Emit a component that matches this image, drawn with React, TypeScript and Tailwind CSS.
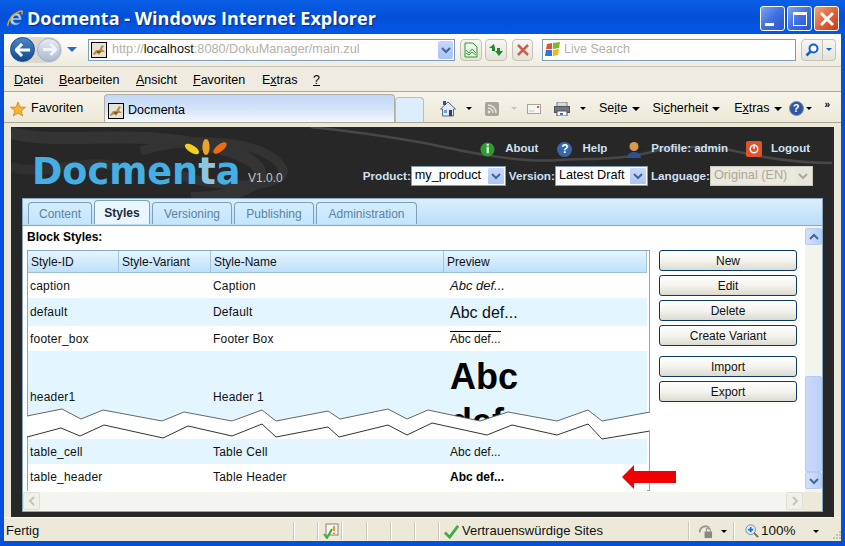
import React from 'react';
import clsx from 'clsx';

const ui = 'font-["Liberation_Sans",Arial,sans-serif]';

const Favicon = () => (
  <span className="flex h-[16px] w-[16px] shrink-0 items-center justify-center border border-black bg-white">
    <svg viewBox="0 0 14 14" className="h-[14px] w-[14px]">
      <rect width="14" height="14" fill="#e6e2d4" />
      <path d="M1 11 L4 7 L7 7 L10 2 L12 3 L10 6 L13 9 L9 9 L7 12 L5 10 L2 12Z" fill="#b98a4a" />
      <path d="M5 8 L9 8 L8 10 L5 10Z" fill="#7d5a2c" />
    </svg>
  </span>
);

const Chevron = ({ up, color = '#3e6a9a' }: { up?: boolean; color?: string }) => (
  <svg viewBox="0 0 10 8" className="h-[8px] w-[10px]">
    <path d={up ? 'M1 6 L5 2 L9 6' : 'M1 2 L5 6 L9 2'} fill="none" stroke={color} strokeWidth="2" />
  </svg>
);

const Caret = ({ className, small }: { className?: string; small?: boolean }) => (
  <span
    className={clsx(
      'inline-block h-0 w-0 border-x-transparent border-t-black',
      small ? 'border-x-[3px] border-t-[3px]' : 'border-x-[4px] border-t-[4px]',
      className,
    )}
  />
);

const WinButton = ({ kind }: { kind: 'min' | 'max' | 'close' }) => (
  <div
    className={clsx(
      'flex h-[25px] w-[25px] items-center justify-center rounded-[3px] border border-white',
      kind === 'close'
        ? 'bg-gradient-to-br from-[#f0a078] via-[#e2623a] to-[#c23c14]'
        : 'bg-gradient-to-br from-[#7fa4f0] via-[#3f6fe0] to-[#2a55c8]',
    )}
  >
    {kind === 'min' && <span className="mt-[12px] mr-[6px] block h-[3px] w-[9px] bg-white" />}
    {kind === 'max' && <span className="block h-[14px] w-[14px] border border-t-[3px] border-white" />}
    {kind === 'close' && (
      <svg viewBox="0 0 16 16" className="h-[16px] w-[16px]">
        <path d="M2 2 L14 14 M14 2 L2 14" stroke="#fff" strokeWidth="3" />
      </svg>
    )}
  </div>
);

const TitleBar = () => (
  <div className="flex h-[34px] shrink-0 items-center bg-gradient-to-b from-[#0a5fe6] via-[#0450d8] to-[#0258e4] pr-[6px] pl-[7px]">
    <svg viewBox="0 0 16 18" className="mt-[3px] h-[18px] w-[16px] shrink-0">
      <path d="M3 10 C3 5 7 3 10 3 C13 3 14.5 6 14.5 10 L6.5 10 C6.5 13 10 14 13.5 12 C11 17 3 16 3 10Z M6.5 8 L11.5 8 C11.5 5 7 5 6.5 8Z" fill="#a9cdf0" fillRule="evenodd" stroke="#1d5aa8" strokeWidth="0.6" />
      <path d="M1 16 C0 11 6 3 14 1 C16 1 15.5 3 14.5 4.5" fill="none" stroke="#e8a020" strokeWidth="1.4" />
    </svg>
    <span className='mt-[2px] ml-[4px] font-["Open_Sans",sans-serif] text-[18px] leading-none font-bold whitespace-nowrap text-white [text-shadow:1px_1px_1px_#0a2a80]'>
      Docmenta - Windows Internet Explorer
    </span>
    <div className="mt-[3px] ml-auto flex gap-[2px]">
      <WinButton kind="min" />
      <WinButton kind="max" />
      <WinButton kind="close" />
    </div>
  </div>
);

const NavSmallButton = ({ children, className }: { children: React.ReactNode; className?: string }) => (
  <div className={clsx('flex h-[22px] items-center justify-center rounded-[4px] border border-[#c6c3b6] bg-gradient-to-b from-[#f6f6f2] to-[#e4e3da]', className)}>
    {children}
  </div>
);

const NavBar = () => (
  <div className="flex h-[32px] shrink-0 items-center bg-gradient-to-b from-white to-[#eeecdf] pb-[1px] pl-[6px]">
    <div className="flex h-[26px] w-[52px] items-center rounded-full bg-[#dbd9cf]">
      <div className="flex h-[25px] w-[25px] items-center justify-center rounded-full border border-[#1d4f8c] bg-gradient-to-b from-[#4a86c8] to-[#10498e]">
        <svg viewBox="0 0 16 14" className="h-[14px] w-[16px]">
          <path d="M7 1 L1 7 L7 13 M1 7 L15 7" fill="none" stroke="#fff" strokeWidth="3" />
        </svg>
      </div>
      <div className="ml-[2px] flex h-[24px] w-[24px] items-center justify-center rounded-full border border-[#9fb0c6] bg-gradient-to-b from-[#e6ebf3] to-[#a9bad2]">
        <svg viewBox="0 0 16 14" className="h-[13px] w-[15px]">
          <path d="M9 1 L15 7 L9 13 M15 7 L1 7" fill="none" stroke="#f2f4f7" strokeWidth="3" />
        </svg>
      </div>
    </div>
    <span className="ml-[5px] h-0 w-0 border-x-[5px] border-t-[5px] border-x-transparent border-t-[#2d6cc0]" />
    <div className="ml-[11px] flex h-[22px] w-[367px] items-center border border-[#7f9db9] bg-white pr-[1px] pl-[2px]">
      <Favicon />
      <span className={clsx(ui, 'ml-[5px] text-[12.7px] whitespace-nowrap text-[#b5b0a8]')}>
        http://<span className="text-[#111]">localhost</span>:8080/DokuManager/main.zul
      </span>
      <div className="ml-auto flex h-[18px] w-[15px] items-center justify-center rounded-[2px] bg-gradient-to-b from-[#c5d6fa] to-[#aac3f5]">
        <Chevron />
      </div>
    </div>
    <NavSmallButton className="ml-[5px] w-[22px]">
      <svg viewBox="0 0 14 16" className="h-[16px] w-[14px]">
        <path d="M1 1 L9 1 L13 5 L13 15 L1 15Z" fill="#eef8ea" stroke="#2a9a30" />
        <path d="M2 8 L5 11 L8 7 L12 11 M2 11 L5 13 L8 10 L12 13" fill="none" stroke="#2a9a30" />
      </svg>
    </NavSmallButton>
    <NavSmallButton className="ml-[3px] w-[22px]">
      <svg viewBox="0 0 16 14" className="h-[14px] w-[16px]">
        <path d="M6 1 L1 5 L4 5 L4 8 L7 8 L7 5 Z" fill="#1e8a2a" />
        <path d="M11 13 L15 8 L12 8 L12 5 L9 5 L9 8 L7 8Z" fill="#1e8a2a" />
      </svg>
    </NavSmallButton>
    <NavSmallButton className="ml-[5px] w-[21px]">
      <svg viewBox="0 0 12 12" className="h-[12px] w-[12px]">
        <path d="M1 1 L11 11 M11 1 L1 11" stroke="#c8604c" strokeWidth="2.5" />
      </svg>
    </NavSmallButton>
    <div className="ml-[9px] flex h-[22px] w-[254px] items-center border border-[#7f9db9] bg-white pl-[2px]">
      <svg viewBox="0 0 16 15" className="h-[15px] w-[16px]">
        <path d="M2 2 L7 1 L7 7 L1 7Z" fill="#e8502a" />
        <path d="M8 1 L15 0 L14 6 L8 7Z" fill="#7cb82a" />
        <path d="M1 8 L7 8 L7 14 L0 14Z" fill="#2a78d8" />
        <path d="M8 8 L14 7 L13 13 L8 14Z" fill="#f4b818" />
      </svg>
      <span className={clsx(ui, 'ml-[3px] text-[12.5px] text-[#b5b0a8]')}>Live Search</span>
    </div>
    <NavSmallButton className="ml-[5px] w-[22px] rounded-r-none">
      <svg viewBox="0 0 14 14" className="h-[14px] w-[14px]">
        <circle cx="8.5" cy="5.5" r="4" fill="#fff" stroke="#1060d0" strokeWidth="2" />
        <path d="M5.5 8.5 L1.5 12.5" stroke="#1060d0" strokeWidth="2.5" />
      </svg>
    </NavSmallButton>
    <NavSmallButton className="w-[13px] rounded-l-none border-l-0">
      <span className="h-0 w-0 border-x-[3px] border-t-[3px] border-x-transparent border-t-[#1060d0]" />
    </NavSmallButton>
  </div>
);

const MenuItem = ({ pre = '', u, post = '', className }: { pre?: string; u: string; post?: string; className: string }) => (
  <span className={className}>
    {pre}
    <u>{u}</u>
    {post}
  </span>
);

const MenuBar = () => (
  <div className={clsx(ui, 'flex h-[26px] shrink-0 items-center border-y border-b-[#aca899] border-t-[#c9c7bb] bg-[#efecdf] pt-[2px] pl-[10px] text-[12.5px] text-black')}>
    <MenuItem u="D" post="atei" className="w-[45px]" />
    <MenuItem u="B" post="earbeiten" className="w-[77px]" />
    <MenuItem u="A" post="nsicht" className="w-[57px]" />
    <MenuItem u="F" post="avoriten" className="w-[69px]" />
    <MenuItem pre="E" u="x" post="tras" className="w-[51px]" />
    <MenuItem u="?" className="" />
  </div>
);

const TabBar = () => (
  <div className={clsx(ui, 'flex h-[31px] shrink-0 items-end border-b border-[#aca899] bg-gradient-to-b from-[#f6f4ea] to-[#ece9d8] pl-[6px] text-[12.5px] text-black')}>
    <div className="mb-[4px] flex w-[94px] items-center">
      <svg viewBox="0 0 16 16" className="h-[16px] w-[16px]">
        <path d="M8 1 L10 6 L15.5 6.3 L11.2 9.8 L12.7 15 L8 12 L3.3 15 L4.8 9.8 L0.5 6.3 L6 6Z" fill="#f7b32c" stroke="#c8781a" strokeWidth="0.7" />
      </svg>
      <span className="ml-[5px]">Favoriten</span>
    </div>
    <div className="flex h-[28px] w-[291px] items-center rounded-t-[4px] border border-b-0 border-[#b0aea2] bg-gradient-to-b from-[#c3d8f7] via-[#d3e3f9] to-[#f3f8fe] pt-[4px] pl-[3px]">
      <Favicon />
      <span className="ml-[4px]">Docmenta</span>
    </div>
    <div className="h-[25px] w-[29px] rounded-t-[4px] border border-b-0 border-[#c0beb2] bg-[#dceefb]" />
    <div className="mb-[4px] ml-[16px] flex items-center">
      <svg viewBox="0 0 16 16" className="h-[16px] w-[16px]">
        <path d="M0.5 8 L8 1 L15.5 8 L13.5 8 L13.5 15 L2.5 15 L2.5 8Z" fill="#e7e7ea" stroke="#4a6e9a" />
        <rect x="3" y="0" width="3" height="4" fill="#2a50b8" />
        <rect x="9" y="9" width="3" height="6" fill="#243f70" />
        <rect x="4" y="9" width="3" height="3" fill="#6f9ed0" />
      </svg>
      <Caret small className="ml-[10px]" />
      <span className="ml-[13px] flex h-[14px] w-[14px] items-center justify-center rounded-[2px] bg-[#a8a49a]">
        <svg viewBox="0 0 10 10" className="h-[10px] w-[10px]">
          <circle cx="2" cy="8" r="1.4" fill="#e8e6de" />
          <path d="M1 4 A5 5 0 0 1 6 9 M1 1 A8 8 0 0 1 9 9" fill="none" stroke="#e8e6de" strokeWidth="1.4" />
        </svg>
      </span>
      <span className="ml-[12px] h-0 w-0 border-x-[3px] border-t-[3px] border-x-transparent border-t-[#c8c6bc]" />
      <svg viewBox="0 0 14 10" className="ml-[10px] h-[10px] w-[14px]">
        <rect x="0.5" y="0.5" width="13" height="9" fill="#f6f5f1" stroke="#a8a49a" />
        <rect x="10" y="2" width="2" height="2" fill="#c86040" />
        <path d="M2 7 L7 7" stroke="#c4c1b6" />
      </svg>
      <svg viewBox="0 0 16 14" className="ml-[13px] h-[14px] w-[16px]">
        <rect x="3" y="0" width="10" height="5" fill="#d8d8d8" stroke="#7a7a7a" />
        <rect x="0.5" y="4.5" width="15" height="6" fill="#70757c" stroke="#50555c" />
        <rect x="3" y="9" width="10" height="5" fill="#fff" stroke="#50555c" />
        <rect x="6" y="11" width="3" height="2" fill="#3a78c8" />
      </svg>
      <Caret small className="ml-[10px]" />
      <span className="ml-[13px]">
        Se<u>i</u>te
      </span>
      <Caret className="ml-[4px]" />
      <span className="ml-[13px]">
        Si<u>c</u>herheit
      </span>
      <Caret className="ml-[4px]" />
      <span className="ml-[14px]">
        E<u>x</u>tras
      </span>
      <Caret className="ml-[4px]" />
      <span className="ml-[7px] flex h-[15px] w-[15px] items-center justify-center rounded-full border border-[#8a8f96] bg-[#2a55a8] text-[11px] font-bold text-white">
        ?
      </span>
      <Caret small className="ml-[2px]" />
    </div>
    <span className="mb-[12px] ml-[13px] text-[10px] leading-none font-bold">»</span>
  </div>
);

const HeaderLink = ({ icon, label, className }: { icon: React.ReactNode; label: string; className?: string }) => (
  <div className={clsx('flex items-center', className)}>
    {icon}
    <span className="ml-[10px]">{label}</span>
  </div>
);

const SelectBox = ({ value, width, disabled }: { value: string; width: string; disabled?: boolean }) => (
  <div
    className={clsx(
      'flex h-[20px] items-center border pr-[1px] pl-[3px] text-[12.7px] font-normal whitespace-nowrap',
      width,
      disabled ? 'border-[#c9c7ba] bg-[#ebe9dd] text-[#aca899]' : 'border-[#7f9db9] bg-white text-black',
    )}
  >
    {value}
    <span
      className={clsx(
        'ml-auto flex h-[16px] w-[16px] items-center justify-center rounded-[1px]',
        disabled ? 'bg-[#e8e6da]' : 'bg-gradient-to-b from-[#c9d9f9] to-[#aec6f4]',
      )}
    >
      <Chevron color={disabled ? '#aca899' : '#3e6a9a'} />
    </span>
  </div>
);

const AppHeader = () => (
  <div className="relative h-[71px] shrink-0">
    <svg viewBox="0 0 824 71" className="absolute inset-0 h-full w-full" preserveAspectRatio="none">
      <path d="M300 0 C350 5 380 10 414 16 C460 26 510 36 549 33 C580 31 610 34 649 23 C680 18 710 20 729 25 C760 32 790 36 822 36" fill="none" stroke="#474747" strokeWidth="2.5" />
      <path d="M0 6 C60 20 120 -2 220 24 C280 46 240 71 180 71" fill="none" stroke="#343434" strokeWidth="12" />
      <path d="M130 24 C190 6 260 16 272 42 C280 60 210 64 170 48" fill="none" stroke="#333" strokeWidth="9" />
      <path d="M0 40 C40 50 70 30 110 40" fill="none" stroke="#303030" strokeWidth="10" />
    </svg>
    <div className="relative flex h-full flex-col">
      <div className={clsx(ui, 'flex h-[34px] items-center justify-end pt-[10px] pr-[24px] text-[11.5px] font-bold text-[#cfe0f2]')}>
        <HeaderLink
          label="About"
          icon={
            <svg viewBox="0 0 16 16" className="h-[15px] w-[15px]">
              <circle cx="8" cy="8" r="7.5" fill="#2f9a2f" />
              <rect x="7" y="5" width="2.5" height="7" fill="#d8f0d0" />
              <rect x="7" y="2" width="2.5" height="2" fill="#d8f0d0" />
            </svg>
          }
        />
        <HeaderLink
          label="Help"
          className="ml-[19px]"
          icon={
            <span className="flex h-[15px] w-[15px] items-center justify-center rounded-full bg-[#3a66a8] text-[12px] text-white">?</span>
          }
        />
        <HeaderLink
          label="Profile: admin"
          className="ml-[20px]"
          icon={
            <svg viewBox="0 0 14 17" className="h-[17px] w-[14px]">
              <path d="M0 17 C0 9 14 9 14 17Z" fill="#2f4f90" />
              <circle cx="7" cy="5.5" r="4.5" fill="#d89a50" />
            </svg>
          }
        />
        <HeaderLink
          label="Logout"
          className="ml-[18px]"
          icon={
            <span className="mr-[-1px] flex h-[16px] w-[16px] items-center justify-center rounded-[2px] bg-[#e0532a]">
              <svg viewBox="0 0 10 10" className="h-[10px] w-[10px]">
                <circle cx="5" cy="5" r="3.8" fill="none" stroke="#fff" strokeWidth="1.5" />
                <path d="M5 0 L5 5" stroke="#fff" strokeWidth="1.5" />
              </svg>
            </span>
          }
        />
      </div>
      <div className="flex flex-1">
        <div className="relative ml-[21px] w-[216px] shrink-0">
          <svg viewBox="0 0 44 20" className="absolute -top-[22px] left-[153px] h-[20px] w-[44px]">
            <ellipse cx="7" cy="10" rx="8" ry="3.6" transform="rotate(32 7 10)" fill="#f4d020" />
            <ellipse cx="21" cy="8" rx="3.6" ry="8" fill="#eca428" />
            <ellipse cx="35" cy="9" rx="8" ry="3.6" transform="rotate(-38 35 9)" fill="#ec6c14" />
          </svg>
          <span className='absolute -top-[12px] left-0 font-["DejaVu_Sans",sans-serif] text-[36.6px] leading-[46px] font-bold whitespace-nowrap text-[#45aee2]'>
            Docmen<span className="text-[#8cc6e0]">t</span>a
          </span>
        </div>
        <span className={clsx(ui, 'mt-[10px] h-[14px] text-[12px] leading-[14px] text-[#b8c4d0]')}>V1.0.0</span>
        <div className={clsx(ui, 'mt-[5px] ml-auto flex h-[20px] items-center pr-[21px] text-[11.7px] font-bold text-[#cfe0f2]')}>
          <span>Product:</span>
          <SelectBox value="my_product" width="w-[95px]" />
          <span className="ml-[3px]">Version:</span>
          <SelectBox value="Latest Draft" width="w-[93px]" />
          <span className="ml-[3px]">Language:</span>
          <SelectBox value="Original (EN)" width="w-[103px]" disabled />
        </div>
      </div>
    </div>
  </div>
);

const tabs = [
  { label: 'Content', width: 'w-[64px]' },
  { label: 'Styles', width: 'w-[56px]', active: true },
  { label: 'Versioning', width: 'w-[80px]' },
  { label: 'Publishing', width: 'w-[80px]' },
  { label: 'Administration', width: 'w-[101px]' },
];

const TabStrip = () => (
  <div className={clsx(ui, 'flex h-[27px] shrink-0 items-end gap-[2px] border-b border-[#86a8c0] bg-gradient-to-b from-[#dceefc] to-[#bbddf9] pb-[1px] pl-[5px] text-[12px]')}>
    {tabs.map((t) => (
      <div
        key={t.label}
        className={clsx(
          'flex items-center justify-center rounded-t-[4px] border border-b-0 border-[#7f9fb8]',
          t.width,
          t.active ? 'h-[24px] bg-[#eaf6ff] font-bold text-[#1a2a3a]' : 'h-[22px] bg-gradient-to-b from-[#d4edfe] to-[#c2e6fd] text-[#5c82a4]',
        )}
      >
        {t.label}
      </div>
    ))}
  </div>
);

const Cell = ({ className, children }: { className: string; children?: React.ReactNode }) => (
  <div className={clsx('flex h-full shrink-0 items-center pl-[2px]', className)}>{children}</div>
);

const Row = ({
  id,
  name,
  preview,
  height,
  shaded,
  textClass,
}: {
  id: string;
  name: string;
  preview: React.ReactNode;
  height: string;
  shaded?: boolean;
  textClass?: string;
}) => (
  <div className={clsx('flex shrink-0 overflow-hidden', height, shaded ? 'bg-[#e3f5ff]' : 'bg-white')}>
    <Cell className={clsx('w-[183px] tracking-[0.2px]', textClass)}>{id}</Cell>
    <Cell className={clsx('w-[233px] tracking-[0.2px]', textClass)}>{name}</Cell>
    <Cell className="flex-1 pl-[6px]">{preview}</Cell>
  </div>
);

const HeadCell = ({ label, className }: { label: string; className: string }) => (
  <div className={clsx('flex h-full items-center border-r border-[#a5c3dc] pl-[3px]', className)}>{label}</div>
);

const StyleTable = () => (
  <div className="relative ml-[4px] h-[241px] w-[623px] border border-[#86a8c0] pr-[2px] text-[12px] text-[#111]">
    <div className="flex h-[22px] items-stretch border-b border-[#9dbdd8] bg-gradient-to-b from-[#e6f5fe] to-[#bfe0fa]">
      <HeadCell label="Style-ID" className="w-[91px]" />
      <HeadCell label="Style-Variant" className="w-[92px]" />
      <HeadCell label="Style-Name" className="w-[233px]" />
      <HeadCell label="Preview" className="flex-1" />
    </div>
    <div className="flex h-[218px] flex-col overflow-hidden">
      <Row id="caption" name="Caption" height="h-[25px]" preview={<span className="text-[13px] italic">Abc def...</span>} />
      <Row id="default" name="Default" height="h-[28px]" shaded preview={<span className="pt-[1px] text-[16px]">Abc def...</span>} />
      <Row
        id="footer_box"
        name="Footer Box"
        height="h-[25px]"
        preview={<span className="border-t border-black text-[12px] leading-[14px]">Abc def...</span>}
      />
      <Row
        id="header1"
        name="Header 1"
        height="h-[88px]"
        shaded
        textClass="pt-[4px]"
        preview={
          <div className="h-[88px] w-[80px] pt-[3px] text-[36px] leading-[45px] font-bold text-black">
            Abc
            <br />
            def...
          </div>
        }
      />
      <Row id="table_cell" name="Table Cell" height="h-[25px]" shaded preview={<span>Abc def...</span>} />
      <Row id="table_header" name="Table Header" height="h-[27px]" textClass="pb-[2px]" preview={<b className="pb-[2px] text-black">Abc def...</b>} />
    </div>
    {/* Torn-page break drawn over the table */}
    <svg viewBox="0 0 625 36" className="absolute top-[154px] -left-[1px] h-[36px] w-[625px]">
      <path
        d="M0 11 L35 4 L54 14 L76 5 L135 16 L157 7 L205 16 L235 5 L249 16 L301 6 L313 14 L361 4 L380 14 L401 5 L453 16 L481 7 L530 16 L561 5 L575 16 L623 7 L625 7 L625 26 L623 26 L622 34 L1 34 L0 32Z"
        fill="#fff"
      />
      <path d="M0 32 L1 32 L1 36 L0 36Z" fill="#86a8c0" />
      <path d="M0 11 L35 4 L54 14 L76 5 L135 16 L157 7 L205 16 L235 5 L249 16 L301 6 L313 14 L361 4 L380 14 L401 5 L453 16 L481 7 L530 16 L561 5 L575 16 L623 7" fill="none" stroke="#666" />
      <path d="M0 32 L34 23 L53 31 L77 20 L136 33 L161 21 L205 31 L235 19 L249 32 L301 22 L312 32 L361 20 L380 30 L405 18 L460 30 L485 20 L530 30 L561 19 L575 34 L623 26" fill="none" stroke="#333" />
      <path d="M622.5 26 L622.5 36" stroke="#86a8c0" />
    </svg>
    {/* Red arrow pointing at the last row */}
    <svg viewBox="0 0 54 24" className="absolute top-[214px] left-[594px] h-[24px] w-[54px]">
      <path d="M0 12 L12 0 L12 6 L54 6 L54 18 L12 18 L12 24Z" fill="#f00000" />
    </svg>
  </div>
);

const ActionButton = ({ label }: { label: string }) => (
  <div className="flex h-[21px] w-[138px] items-center justify-center rounded-[3px] border border-[#0a3a6a] bg-gradient-to-b from-white via-[#f4f3ee] to-[#dcdad0] pt-[1px] text-[12px] text-[#111]">
    {label}
  </div>
);

const ScrollButton = ({ up }: { up?: boolean }) => (
  <div className="flex h-[17px] w-[17px] shrink-0 items-center justify-center rounded-[2px] border border-[#b6cdee] bg-gradient-to-r from-[#d4e1fb] to-[#b8cdf6]">
    <Chevron up={up} />
  </div>
);

const StylesPanel = () => (
  <div className={clsx(ui, 'mx-[11px] flex h-[314px] flex-col border border-[#86a8c0] bg-white')}>
    <TabStrip />
    <div className="flex h-[266px] shrink-0">
      <div className="flex w-[782px] shrink-0 flex-col">
        <div className="flex h-[24px] shrink-0 items-end pb-[6px] pl-[4px] text-[12px] leading-[14px] font-bold text-black">Block Styles:</div>
        <div className="flex">
          <StyleTable />
          <div className="ml-[9px] flex flex-col gap-[4px]">
            <ActionButton label="New" />
            <ActionButton label="Edit" />
            <ActionButton label="Delete" />
            <ActionButton label="Create Variant" />
            <div className="mt-[6px] flex flex-col gap-[4px]">
              <ActionButton label="Import" />
              <ActionButton label="Export" />
            </div>
          </div>
        </div>
      </div>
      <div className="flex w-[17px] flex-col bg-[#f4f4ef] pt-[2px]">
        <ScrollButton up />
        <div className="mt-[131px] h-[96px] rounded-[2px] border border-[#b6cdee] bg-gradient-to-r from-[#c9d9fa] to-[#bcd0f8]" />
        <ScrollButton />
      </div>
    </div>
    <div className="flex flex-1 items-start bg-[#f5f5f0]">
      <div className="flex h-[18px] w-[17px] items-center justify-center rounded-[2px] border border-[#e0dfd6] bg-[#f0efe8]">
        <svg viewBox="0 0 8 10" className="h-[10px] w-[8px]">
          <path d="M6 1 L2 5 L6 9" fill="none" stroke="#c4c4be" strokeWidth="2" />
        </svg>
      </div>
      <div className="ml-[746px] flex h-[18px] w-[17px] items-center justify-center rounded-[2px] border border-[#e0dfd6] bg-[#f0efe8]">
        <svg viewBox="0 0 8 10" className="h-[10px] w-[8px]">
          <path d="M2 1 L6 5 L2 9" fill="none" stroke="#c4c4be" strokeWidth="2" />
        </svg>
      </div>
      <div className="h-full flex-1 bg-[#ece9d8]" />
    </div>
  </div>
);

const Sep = ({ className }: { className: string }) => <div className={clsx('h-[18px] border-l border-[#c9c7b8] shadow-[1px_0_0_#fff]', className)} />;

const StatusBar = () => (
  <div className={clsx(ui, 'flex h-[24px] shrink-0 items-center border-t border-[#fbfaf4] bg-[#ece9d8] pt-[3px] pl-[2px] text-[13px] text-[#111]')}>
    <span className="w-[287px]">Fertig</span>
    <Sep className="" />
    <Sep className="ml-[23px]" />
    <svg viewBox="0 0 16 16" className="ml-[5px] h-[16px] w-[16px]">
      <rect x="3" y="1" width="12" height="11" fill="#f6f4ec" stroke="#8a8678" />
      <path d="M11 3 L11 8 M11 9.5 L11 11" stroke="#e87818" strokeWidth="1.6" />
      <path d="M1 11 L4 15 L9 6" fill="none" stroke="#3ab03a" strokeWidth="2" />
    </svg>
    <Sep className="ml-[2px]" />
    <Sep className="ml-[24px]" />
    <Sep className="ml-[23px]" />
    <Sep className="ml-[23px]" />
    <Sep className="ml-[23px]" />
    <svg viewBox="0 0 16 16" className="ml-[5px] h-[15px] w-[15px]">
      <path d="M1 9 L6 14 L15 2" fill="none" stroke="#40ad40" strokeWidth="3" />
    </svg>
    <span className="ml-[3px] w-[226px] whitespace-nowrap">Vertrauenswürdige Sites</span>
    <Sep className="" />
    <svg viewBox="0 0 16 16" className="ml-[9px] h-[15px] w-[15px]">
      <path d="M2 9 A6 6 0 0 1 12 4" fill="none" stroke="#9a9890" strokeWidth="2" />
      <rect x="7" y="8" width="8" height="7" fill="#8a8880" />
      <path d="M9 8 L9 5 L13 5 L13 8" fill="none" stroke="#8a8880" />
    </svg>
    <Caret small className="ml-[8px]" />
    <Sep className="ml-[6px]" />
    <svg viewBox="0 0 16 16" className="ml-[11px] h-[14px] w-[14px]">
      <circle cx="6.5" cy="6.5" r="5.5" fill="#e4effa" stroke="#5a82b0" />
      <path d="M3.5 6.5 L9.5 6.5 M6.5 3.5 L6.5 9.5" stroke="#1c70d0" strokeWidth="2" />
      <path d="M10.5 10.5 L15 15" stroke="#8a6a30" strokeWidth="2.2" />
    </svg>
    <span className="ml-[2px] text-[13.5px]">100%</span>
    <Caret small className="ml-[17px]" />
    <svg viewBox="0 0 10 10" className="mt-[8px] ml-auto h-[10px] w-[10px]">
      <path d="M8 1h2v2h-2z M5 4h2v2h-2z M8 4h2v2h-2z M2 7h2v2h-2z M5 7h2v2h-2z M8 7h2v2h-2z" fill="#c4c1b2" />
    </svg>
  </div>
);

const App: React.FC = () => (
  <div className="flex h-[546px] w-[845px] flex-col overflow-hidden bg-[#0450d8]">
    <TitleBar />
    <div className="mx-[4px] flex h-[507px] flex-col overflow-hidden bg-[#ece9d8]">
      <NavBar />
      <MenuBar />
      <TabBar />
      <div className="flex h-[394px] shrink-0 flex-col px-[7px] pt-[4px]">
        <div className="flex h-[390px] flex-col bg-[#272727]">
          <AppHeader />
          <StylesPanel />
        </div>
      </div>
      <StatusBar />
    </div>
  </div>
);

export default App;
